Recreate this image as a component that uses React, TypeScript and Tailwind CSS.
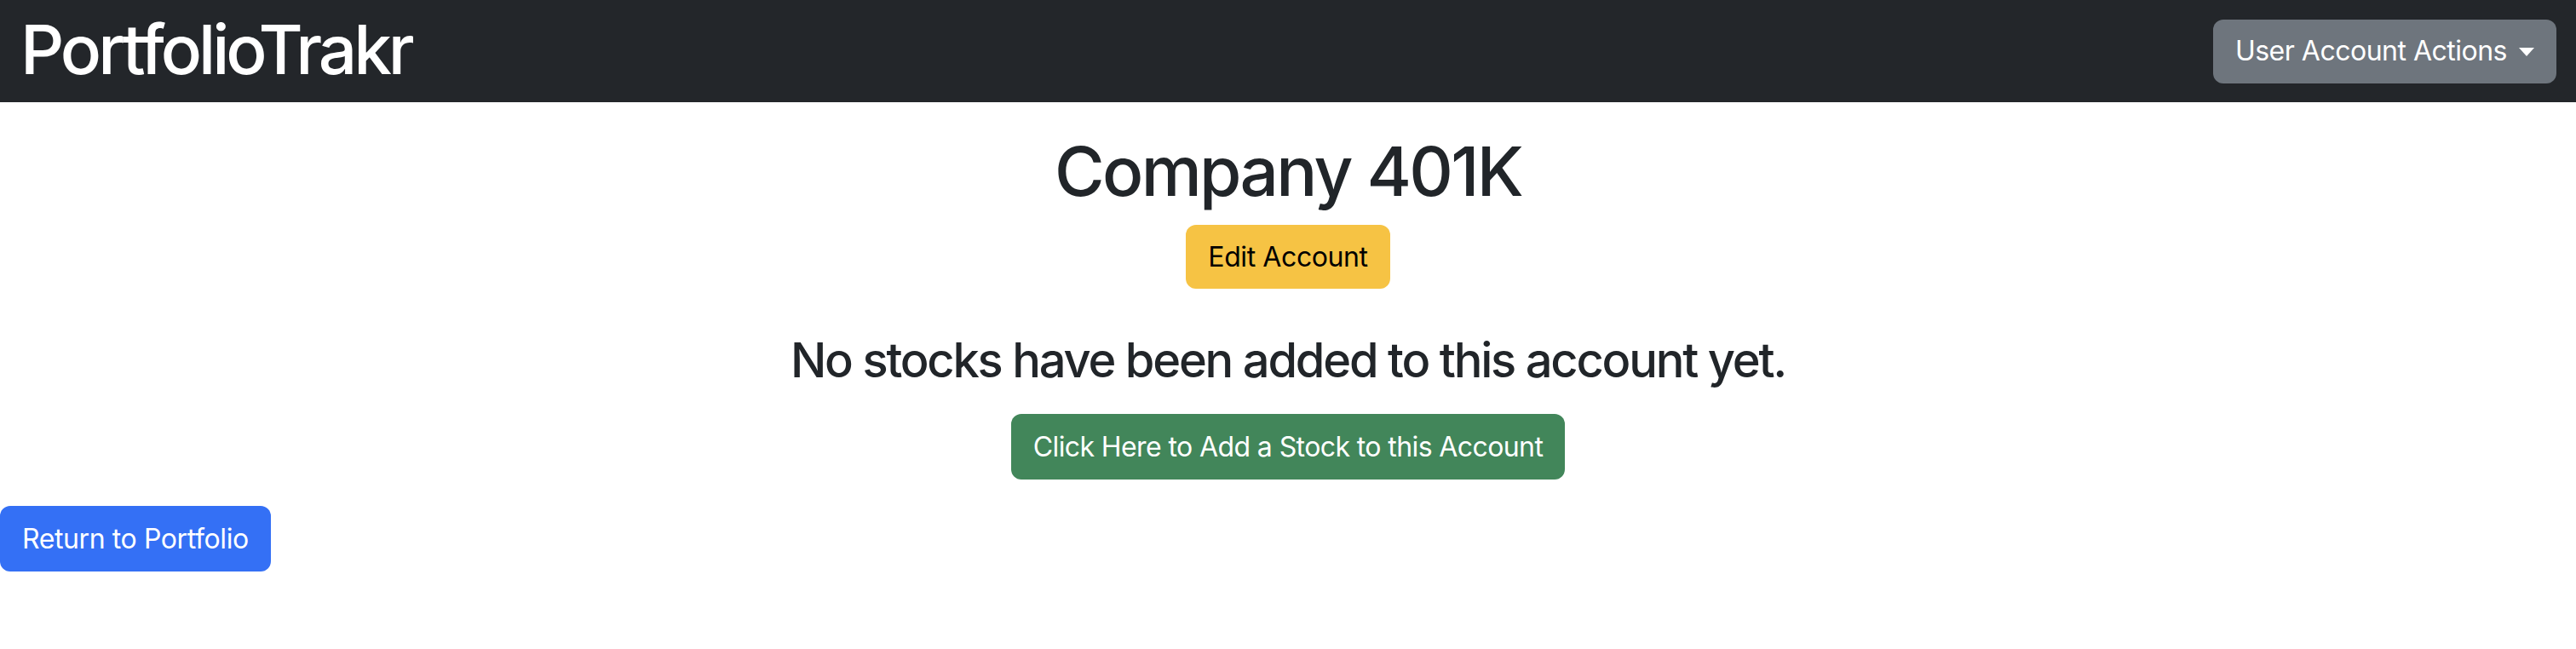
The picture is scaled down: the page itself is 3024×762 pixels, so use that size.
import React from "react";

export default function App() {
  const font = { fontFamily: 'Inter, "Noto Sans", "Liberation Sans", sans-serif' };
  return (
    <div className="min-h-[762px] bg-white text-[#212529]" style={font}>
      <nav className="h-[120px] bg-[#23262a] flex items-center justify-between pl-[24px] pr-[23px]">
        <a className="text-white text-[80px] leading-[1] tracking-[-4px] font-[450] -mt-[4px]">PortfolioTrakr</a>
        <button className="h-[75px] rounded-[12px] bg-[#6e757d] text-white text-[32px] leading-[48px] tracking-[-0.5px] px-[26px] flex items-center">
          User Account Actions
          <span className="ml-[14px] mt-[2px] inline-block w-0 h-0 border-t-[10px] border-t-white border-l-[9.5px] border-l-transparent border-r-[9.5px] border-r-transparent" />
        </button>
      </nav>
      <div className="flex flex-col items-center">
        <h1 className="mt-[33px] text-[80px] leading-[96px] font-medium tracking-[-2.7px]">Company 401K</h1>
        <button className="mt-[15px] h-[75px] rounded-[12px] bg-[#f6c344] text-black text-[32px] leading-[48px] tracking-[-0.4px] px-[26px]">
          Edit Account
        </button>
        <h3 className="mt-[51px] text-[56px] leading-[67px] font-medium tracking-[-2.2px]">No stocks have been added to this account yet.</h3>
        <button className="mt-[29px] h-[77px] rounded-[12px] bg-[#42865a] text-white text-[32px] leading-[48px] tracking-[-0.6px] px-[26px]">
          Click Here to Add a Stock to this Account
        </button>
      </div>
      <div className="mt-[31px]">
        <button className="h-[77px] rounded-[12px] bg-[#3470f5] text-white text-[32px] leading-[48px] tracking-[-0.4px] px-[26px]">
          Return to Portfolio
        </button>
      </div>
    </div>
  );
}
